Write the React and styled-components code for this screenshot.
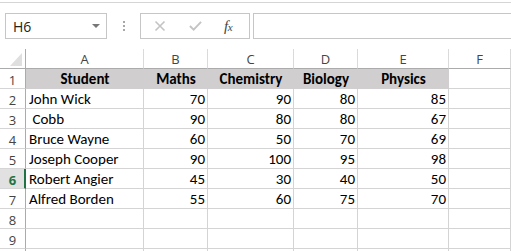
import React from "react";
import styled, { createGlobalStyle } from "styled-components";

const GlobalStyle = createGlobalStyle`
  html, body { margin: 0; padding: 0; background: #fff; overflow: hidden; }
  body { font-family: Carlito, Calibri, Lato, "Liberation Sans", sans-serif; }
`;

const Frame = styled.div`
  width: 511px;
  height: 251px;
  overflow: hidden;
  background: #fff;
`;

const FormulaBar = styled.div`
  margin-top: 2px;
  border-top: 1px solid #d5d5d5;
  padding: 10px 0 10px 5px;
  display: flex;
  align-items: center;
  height: 26px;
`;

const NameBox = styled.div`
  box-sizing: border-box;
  width: 102px;
  height: 26px;
  border: 1px solid #c6c6c6;
  display: flex;
  align-items: center;
  padding: 0 7px 0 7px;
  font-family: "Segoe UI", "Open Sans", "Liberation Sans", sans-serif;
  font-size: 14px;
  color: #222;
`;

const NameText = styled.span`
  flex: 1;
`;

const DropArrow = styled.span`
  width: 0;
  height: 0;
  border-left: 4px solid transparent;
  border-right: 4px solid transparent;
  border-top: 4px solid #777;
  margin-right: -1px;
`;

const Dots = styled.div`
  width: 3px;
  margin: 0 15px 0 15px;
  display: flex;
  flex-direction: column;
  gap: 2px;
  align-items: center;
`;

const Dot = styled.span`
  width: 2px;
  height: 2px;
  background: #a8a8a8;
`;

const FxBox = styled.div`
  box-sizing: border-box;
  width: 110px;
  height: 26px;
  border: 1px solid #c6c6c6;
  display: flex;
  align-items: center;
  padding-left: 12px;
`;

const FxButton = styled.span`
  width: 13px;
  height: 13px;
  display: flex;
  align-items: center;
  justify-content: center;
  margin-right: ${(p) => p.$gap}px;
`;

const FxLabel = styled.span`
  font-family: "Liberation Serif", serif;
  font-style: italic;
  font-size: 15px;
  color: #444;
  letter-spacing: -0.5px;
`;

const FxSub = styled.span`
  font-size: 11px;
`;

const Input = styled.div`
  box-sizing: border-box;
  flex: 1;
  height: 26px;
  border: 1px solid #c6c6c6;
  margin-left: 3px;
  margin-right: -2px;
`;

const Grid = styled.div`
  display: grid;
  grid-template-columns: 26px 118px 64px 86px 64px 91px 1fr;
  grid-auto-rows: 20px;
`;

const Corner = styled.div`
  box-sizing: border-box;
  border-right: 1px solid #ababab;
  border-bottom: 1px solid #ababab;
  position: relative;
`;

const Triangle = styled.span`
  position: absolute;
  right: 3px;
  bottom: 2px;
  width: 0;
  height: 0;
  border-left: 12px solid transparent;
  border-bottom: 13px solid #dfdfdf;
`;

const ColHead = styled.div`
  box-sizing: border-box;
  border-right: 1px solid #dadada;
  border-bottom: 1px solid #ababab;
  display: flex;
  align-items: center;
  justify-content: center;
  font-family: "Segoe UI", "Open Sans", "Liberation Sans", sans-serif;
  font-size: 13px;
  color: #444;
  padding-top: 1px;
`;

const RowHead = styled.div`
  box-sizing: border-box;
  border-right: ${(p) => (p.$active ? "2px solid #217346" : "1px solid #ababab")};
  border-bottom: 1px solid #d5d5d5;
  background: ${(p) => (p.$active ? "#e1e1e1" : "#fff")};
  display: flex;
  align-items: center;
  justify-content: center;
  font-family: "Segoe UI", "Open Sans", "Liberation Sans", sans-serif;
  font-size: 13px;
  font-weight: ${(p) => (p.$active ? 700 : 400)};
  color: ${(p) => (p.$active ? "#217346" : "#444")};
  padding-left: ${(p) => (p.$active ? 1 : 0)}px;
  padding-top: 2px;
`;

const Cell = styled.div`
  box-sizing: border-box;
  border-right: 1px solid ${(p) => (p.$fill ? "#d0cece" : "#d4d4d4")};
  border-bottom: 1px solid ${(p) => (p.$fill ? "#d0cece" : "#d4d4d4")};
  background: ${(p) => (p.$fill ? "#d0cece" : "#fff")};
  display: flex;
  align-items: flex-end;
  justify-content: ${(p) =>
    p.$align === "right" ? "flex-end" : p.$align === "center" ? "center" : "flex-start"};
  padding: 0 2px 0 3px;
  font-size: 15px;
  line-height: 18px;
  font-weight: ${(p) => (p.$bold ? 700 : 400)};
  color: #000;
  white-space: pre;
  overflow: hidden;
`;

const columns = ["A", "B", "C", "D", "E", "F"];
const header = ["Student", "Maths", "Chemistry", "Biology", "Physics"];
const data = [
  ["John Wick", 70, 90, 80, 85],
  [" Cobb", 90, 80, 80, 67],
  ["Bruce Wayne", 60, 50, 70, 69],
  ["Joseph Cooper", 90, 100, 95, 98],
  ["Robert Angier", 45, 30, 40, 50],
  ["Alfred Borden", 55, 60, 75, 70],
];

export default function App() {
  return (
    <Frame>
      <GlobalStyle />
      <FormulaBar>
        <NameBox>
          <NameText>H6</NameText>
          <DropArrow />
        </NameBox>
        <Dots>
          <Dot />
          <Dot />
          <Dot />
        </Dots>
        <FxBox>
          <FxButton $gap={23}>
            <svg width="12" height="12" viewBox="0 0 12 12">
              <path d="M1.5 1.5 L10.5 10.5 M10.5 1.5 L1.5 10.5" stroke="#c4c4c4" strokeWidth="1.6" fill="none" />
            </svg>
          </FxButton>
          <FxButton $gap={22}>
            <svg width="14" height="12" viewBox="0 0 14 12">
              <path d="M1 6 L5 10 L13 1.5" stroke="#c4c4c4" strokeWidth="2" fill="none" />
            </svg>
          </FxButton>
          <FxLabel>
            f<FxSub>x</FxSub>
          </FxLabel>
        </FxBox>
        <Input />
      </FormulaBar>
      <Grid>
        <Corner>
          <Triangle />
        </Corner>
        {columns.map((c) => (
          <ColHead key={c}>{c}</ColHead>
        ))}
        <RowHead>1</RowHead>
        {header.map((h) => (
          <Cell key={h} $fill $bold $align="center">
            {h}
          </Cell>
        ))}
        <Cell />
        {data.map((row, i) => (
          <React.Fragment key={i}>
            <RowHead $active={i + 2 === 6}>{i + 2}</RowHead>
            {row.map((v, j) => (
              <Cell key={j} $align={j === 0 ? "left" : "right"}>
                {v}
              </Cell>
            ))}
            <Cell />
          </React.Fragment>
        ))}
        {[8, 9, 10].map((n) => (
          <React.Fragment key={n}>
            <RowHead>{n < 10 ? n : ""}</RowHead>
            {columns.map((c) => (
              <Cell key={c} />
            ))}
          </React.Fragment>
        ))}
      </Grid>
    </Frame>
  );
}
